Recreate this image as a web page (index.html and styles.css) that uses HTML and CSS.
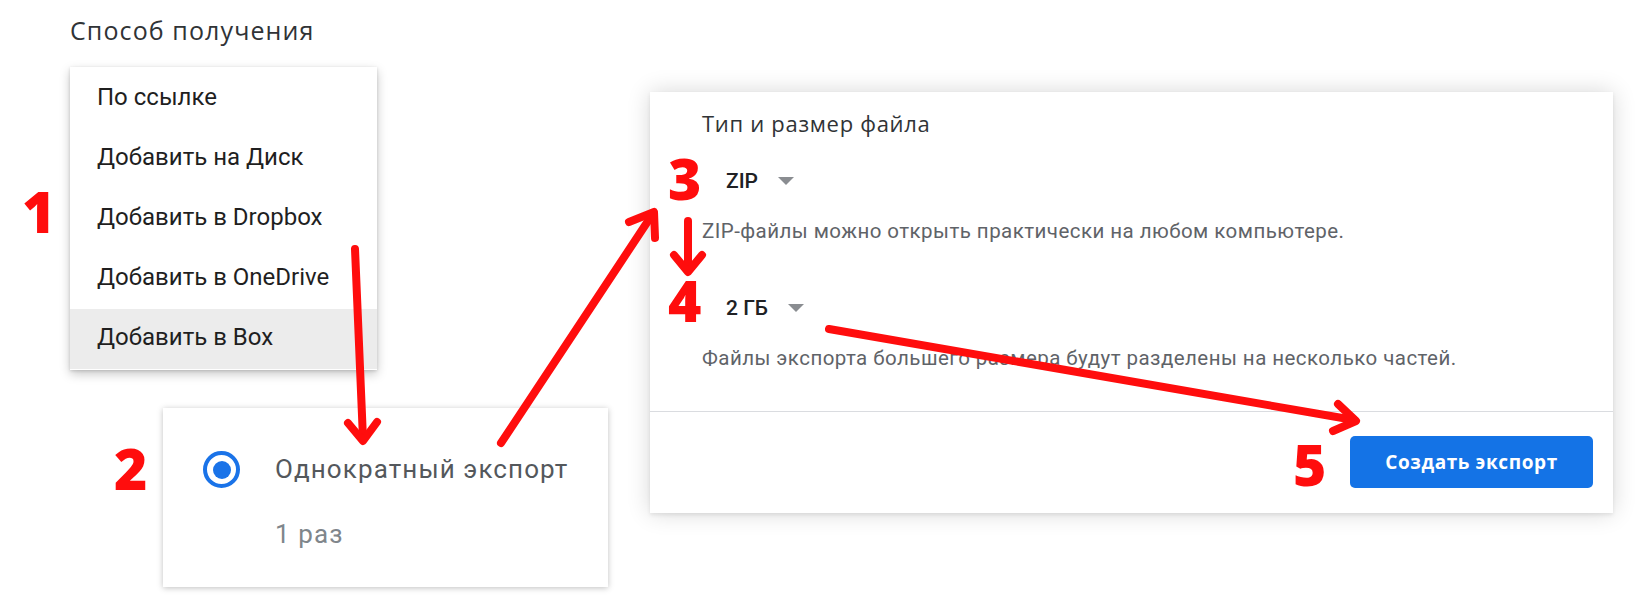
FILE: index.html
```html
<html>
    <head>
        <meta charset="utf-8">
        <link rel="stylesheet" href="styles.css">
        <title>Экспорт</title>
    </head>
    <body>
        <div class="page">
            <div class="col-left">
                <div class="heading">Способ получения</div>
                <ul class="menu">
                    <li>По ссылке</li>
                    <li>Добавить на Диск</li>
                    <li>Добавить в Dropbox</li>
                    <li>Добавить в OneDrive</li>
                    <li class="active">Добавить в Box</li>
                </ul>
                <div class="card once">
                    <span class="radio"></span>
                    <div class="once-text">
                        <div class="once-title">Однократный экспорт</div>
                        <div class="once-sub">1 раз</div>
                    </div>
                </div>
            </div>

            <div class="card export">
                <div class="export-body">
                    <div class="export-title">Тип и размер файла</div>
                    <div class="select first"><span>ZIP</span><span class="caret"></span></div>
                    <p class="hint">ZIP-файлы можно открыть практически на любом компьютере.</p>
                    <div class="select second"><span>2 ГБ</span><span class="caret"></span></div>
                    <p class="hint">Файлы экспорта большего размера будут разделены на несколько частей.</p>
                </div>
                <div class="export-footer">
                    <button class="btn-export">Создать экспорт</button>
                </div>
            </div>

            <!-- annotations drawn over the screenshot -->
            <svg class="arrows" width="1638" height="600" viewBox="0 0 1638 600">
                <g fill="none" stroke="#ff0d0d" stroke-width="8" stroke-linecap="round" stroke-linejoin="round">
                    <line x1="355" y1="249" x2="363" y2="439"/>
                    <polyline points="348,423 363,441 377,422"/>
                    <line x1="501" y1="443" x2="652" y2="215"/>
                    <polyline points="629,222 654,212 655,238"/>
                    <line x1="688" y1="221" x2="688" y2="270"/>
                    <polyline points="674,255 688,272 702,255"/>
                    <line x1="829" y1="329" x2="1354" y2="420"/>
                    <polyline points="1338,404 1356,421 1333,431"/>
                </g>
            </svg>
            <div class="mark m1">1</div>
            <div class="mark m2">2</div>
            <div class="mark m3">3</div>
            <div class="mark m4">4</div>
            <div class="mark m5">5</div>
        </div>
    </body>
</html>
```

FILE: styles.css
```css
body {
    margin: 0;
    background: #fff;
    font-family: Roboto, "Liberation Sans", sans-serif;
}
.page {
    position: relative;
    display: flex;
    width: 1638px;
    height: 600px;
    overflow: hidden;
}
.col-left {
    width: 650px;
    flex: none;
}
.heading {
    box-sizing: border-box;
    height: 67px;
    padding: 16px 0 0 70px;
    font-family: "Open Sans", Roboto, sans-serif;
    font-size: 25px;
    line-height: 28px;
    letter-spacing: 1.1px;
    color: #303336;
}
.menu {
    list-style: none;
    margin: 0 0 0 70px;
    padding: 2px 0 1px;
    width: 307px;
    background: #fff;
    box-shadow: 0 4px 10px rgba(0,0,0,0.22), 0 1px 3px rgba(0,0,0,0.14);
}
.menu li {
    height: 60px;
    padding-left: 27px;
    font-size: 24px;
    line-height: 56px;
    color: #1f1f1f;
}
.menu li.active {
    background: #ececec;
}
.card {
    background: #fff;
    box-sizing: border-box;
}
.once {
    display: flex;
    width: 445px;
    height: 179px;
    margin: 38px 0 0 163px;
    padding: 43px 0 0 40px;
    box-shadow: 0 1px 6px rgba(0,0,0,0.25);
}
.radio {
    box-sizing: border-box;
    width: 37px;
    height: 37px;
    border: 4px solid #1a73e8;
    border-radius: 50%;
    padding: 5.5px;
    flex: none;
}
.radio::after {
    content: "";
    display: block;
    width: 18px;
    height: 18px;
    border-radius: 50%;
    background: #1a73e8;
}
.once-text {
    margin: 3px 0 0 35px;
}
.once-title {
    font-size: 26px;
    line-height: 30px;
    color: #54585c;
    letter-spacing: 1.1px;
}
.once-sub {
    margin-top: 35px;
    font-size: 26px;
    line-height: 30px;
    letter-spacing: 1.1px;
    color: #80868b;
}
.export {
    width: 963px;
    height: 421px;
    margin-top: 92px;
    box-shadow: 0 0 22px rgba(0,0,0,0.16), 0 2px 4px rgba(0,0,0,0.08);
}
.export-body {
    box-sizing: border-box;
    height: 320px;
    padding: 18px 0 0 52px;
    border-bottom: 1px solid #dadce0;
}
.export-title {
    font-family: "Open Sans", Roboto, sans-serif;
    font-size: 22px;
    line-height: 26px;
    letter-spacing: 0.7px;
    color: #303336;
}
.select {
    display: flex;
    align-items: center;
    margin-left: 24px;
    font-size: 21px;
    font-weight: 500;
    line-height: 26px;
    color: #202124;
}
.select.first {
    margin-top: 32px;
}
.select.second {
    margin-top: 52px;
}
.caret {
    width: 0;
    height: 0;
    margin-left: 20px;
    border-left: 8px solid transparent;
    border-right: 8px solid transparent;
    border-top: 8px solid #8a8d91;
}
.hint {
    margin: 25px 0 0;
    font-size: 20.5px;
    line-height: 24px;
    letter-spacing: 0.45px;
    color: #5f6368;
}
.export-footer {
    display: flex;
    justify-content: flex-end;
    padding: 24px 20px 0 0;
}
.btn-export {
    width: 243px;
    height: 52px;
    border: none;
    border-radius: 5px;
    background: #1473e6;
    color: #fff;
    font-family: "Open Sans", Roboto, sans-serif;
    font-size: 19px;
    font-weight: 700;
    letter-spacing: 0.6px;
}
.arrows {
    position: absolute;
    left: 0;
    top: 0;
    pointer-events: none;
}
.mark {
    position: absolute;
    font-family: "Open Sans", Roboto, sans-serif;
    font-weight: 800;
    font-size: 57px;
    line-height: 56px;
    color: #ff0d0d;
}
.m1 { left: 22px; top: 183px; }
.m2 { left: 114px; top: 440px; }
.m3 { left: 668px; top: 150px; }
.m4 { left: 668px; top: 272px; }
.m5 { left: 1293px; top: 436px; }
```
